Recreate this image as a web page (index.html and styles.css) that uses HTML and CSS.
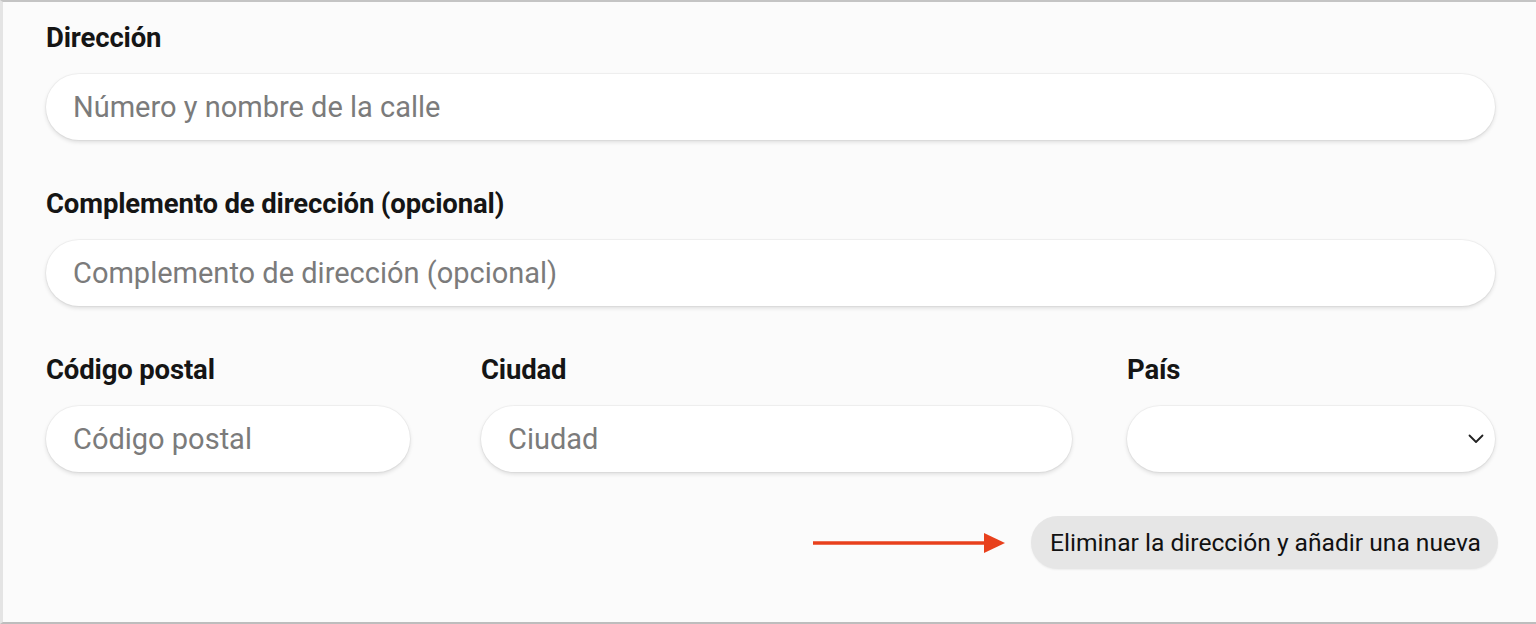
FILE: index.html
```html
<!DOCTYPE html>
<html lang="es">
<head>
<meta charset="utf-8">
<title>Dirección</title>
<link rel="stylesheet" href="styles.css">
</head>
<body>
<div class="frame">
  <form class="form">
    <div class="field">
      <label class="label" for="street">Dirección</label>
      <input class="input" id="street" type="text" placeholder="Número y nombre de la calle">
    </div>
    <div class="field">
      <label class="label" for="extra">Complemento de dirección (opcional)</label>
      <input class="input" id="extra" type="text" placeholder="Complemento de dirección (opcional)">
    </div>
    <div class="row">
      <div class="field col-postal">
        <label class="label" for="zip">Código postal</label>
        <input class="input" id="zip" type="text" placeholder="Código postal">
      </div>
      <div class="field col-city">
        <label class="label" for="city">Ciudad</label>
        <input class="input" id="city" type="text" placeholder="Ciudad">
      </div>
      <div class="field col-country">
        <label class="label" for="country">País</label>
        <div class="select">
          <span class="select-value"></span>
          <svg class="chevron" width="16" height="10" viewBox="0 0 16 10"><path d="M1.5 1.5 L8 8 L14.5 1.5" fill="none" stroke="#222" stroke-width="1.8" stroke-linecap="round" stroke-linejoin="round"/></svg>
        </div>
      </div>
    </div>
    <div class="actions">
      <svg class="arrow" width="192" height="24" viewBox="0 0 192 24"><line x1="0" y1="12" x2="174" y2="12" stroke="#e8401c" stroke-width="3.5"/><polygon points="171,2 192,12 171,22" fill="#e8401c"/></svg>
      <button class="btn" type="button">Eliminar la dirección y añadir una nueva</button>
    </div>
  </form>
</div>
</body>
</html>
```
FILE: styles.css
```css
* { box-sizing: border-box; }
html, body { margin: 0; padding: 0; }
body {
  background: #fbfbfb;
  font-family: Roboto, "Liberation Sans", sans-serif;
  color: #1a1a1a;
}
.frame {
  height: 624px;
  border-top: 2px solid #c4c4c4;
  border-left: 3px solid #e4e4e4;
  border-bottom: 2px solid #bdbdbd;
  padding: 21px 41px 0 43px;
}
.form { display: flex; flex-direction: column; }
.field { display: flex; flex-direction: column; margin-bottom: 49px; }
.label {
  font-size: 27.5px;
  line-height: 30px;
  font-weight: 700;
  color: #151515;
  margin-bottom: 21px;
  letter-spacing: -0.15px;
}
.input, .select {
  height: 66px;
  border: none;
  border-radius: 33px;
  background: #fff;
  box-shadow: 0 2px 4px rgba(0,0,0,0.13), 0 0 0 1px rgba(0,0,0,0.035);
  padding: 0 27px;
  font-family: Roboto, "Liberation Sans", sans-serif;
  font-size: 29px;
  color: #222;
  outline: none;
  width: 100%;
}
.input::placeholder { color: #7b7b7b; }
.row { display: flex; }
.row .field { margin-bottom: 44px; }
.col-postal { width: 435px; padding-right: 71px; }
.col-city { width: 646px; padding-right: 55px; }
.col-country { flex: 1; }
.select {
  display: flex;
  align-items: center;
  justify-content: space-between;
  padding-right: 11px;
}
.actions {
  display: flex;
  justify-content: flex-end;
  align-items: center;
  gap: 26px;
  margin-right: -3px;
}
.arrow { display: block; }
.btn {
  height: 53px;
  border: none;
  border-radius: 27px;
  background: #e6e6e6;
  padding: 0 17px 0 19px;
  font-family: Roboto, "Liberation Sans", sans-serif;
  font-size: 24.6px;
  color: #111;
  box-shadow: 0 1px 2px rgba(0,0,0,0.06);
}
```
